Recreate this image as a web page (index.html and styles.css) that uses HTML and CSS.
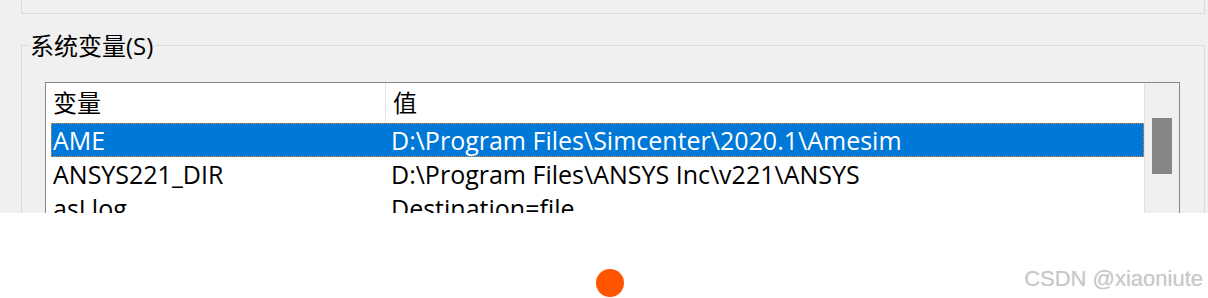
FILE: index.html
```html
<!DOCTYPE html>
<html lang="zh-CN">
<head>
<meta charset="utf-8">
<title>系统变量</title>
<link rel="stylesheet" href="styles.css">
</head>
<body>
<div class="panel">
  <div class="group-top"></div>
  <div class="sys-head">
    <div class="corner-l"></div>
    <div class="legend">系统变量(S)</div>
    <div class="corner-r"></div>
  </div>
  <div class="sys-body">
    <div class="listbox">
      <div class="list-main">
        <div class="list-header">
          <div class="hcell hcell-name">变量</div>
          <div class="hcell hcell-value">值</div>
        </div>
        <div class="row selected">
          <div class="cell cell-name">AME</div>
          <div class="cell cell-value">D:\Program Files\Simcenter\2020.1\Amesim</div>
        </div>
        <div class="row">
          <div class="cell cell-name">ANSYS221_DIR</div>
          <div class="cell cell-value">D:\Program Files\ANSYS Inc\v221\ANSYS</div>
        </div>
        <div class="row">
          <div class="cell cell-name">asLlog</div>
          <div class="cell cell-value">Destination=file</div>
        </div>
      </div>
      <div class="scrollbar">
        <div class="thumb"></div>
      </div>
    </div>
  </div>
</div>
<div class="footer">
  <div class="dot"></div>
  <div class="watermark">CSDN @xiaoniute</div>
</div>
</body>
</html>
```

FILE: styles.css
```css
html, body {
  margin: 0;
  padding: 0;
  background: #ffffff;
}

body {
  font-family: "Open Sans", "Noto Sans CJK SC", sans-serif;
  font-size: 24px;
  color: #000000;
}

.panel {
  height: 213px;
  background: #f0f0f0;
  overflow: hidden;
}

.group-top {
  margin: 0 3px 0 21px;
  height: 13px;
  border: 1px solid #dcdcdc;
  border-top: none;
}

.sys-head {
  display: flex;
  margin: 15px 3px 0 21px;
  height: 32px;
}

.corner-l,
.corner-r {
  align-self: flex-end;
  height: 15px;
  border-top: 1px solid #dcdcdc;
}

.corner-l {
  width: 8px;
  border-left: 1px solid #dcdcdc;
}

.corner-r {
  flex: 1;
  border-right: 1px solid #dcdcdc;
}

.legend {
  line-height: 32px;
  padding: 1px 3px 0 0;
  white-space: nowrap;
}

.sys-body {
  margin: 0 3px 0 21px;
  height: 200px;
  border-left: 1px solid #dcdcdc;
  border-right: 1px solid #dcdcdc;
  padding: 21px 24px 0 23px;
}

.listbox {
  display: flex;
  height: 200px;
  border: 1px solid #828790;
  background: #ffffff;
}

.list-main {
  flex: 1;
  min-width: 0;
}

.list-header {
  display: flex;
  height: 40px;
}

.hcell {
  line-height: 40px;
  padding-left: 7px;
  white-space: nowrap;
}

.hcell-name {
  width: 332px;
  border-right: 1px solid #e5e5e5;
}

.hcell-value {
  flex: 1;
}

.row {
  display: flex;
  height: 34px;
  margin-left: 5px;
  font-size: 25px;
  line-height: 34px;
  white-space: nowrap;
}

.row.selected {
  background: #0078d7;
  color: #ffffff;
  outline: 1px dotted #f08a2c;
  outline-offset: -1px;
}

.cell-name {
  width: 332px;
  padding-left: 2px;
}

.cell-value {
  flex: 1;
  padding-left: 6px;
}

.scrollbar {
  width: 34px;
  border-left: 1px solid #e3e3e3;
  background: #f0f0f0;
  padding-top: 35px;
}

.thumb {
  width: 20px;
  height: 56px;
  margin-left: 7px;
  background: #868686;
}

.footer {
  height: 85px;
  display: flex;
  align-items: flex-start;
}

.dot {
  width: 28px;
  height: 28px;
  margin: 56px 0 0 596px;
  border-radius: 50%;
  background: #ff5500;
}

.watermark {
  margin: 53px 5px 0 auto;
  font-family: "Liberation Sans", Arial, sans-serif;
  font-size: 22px;
  line-height: 26px;
  color: #c8c8c8;
  text-shadow: 0 0 1px #e0e0e0;
}
```
